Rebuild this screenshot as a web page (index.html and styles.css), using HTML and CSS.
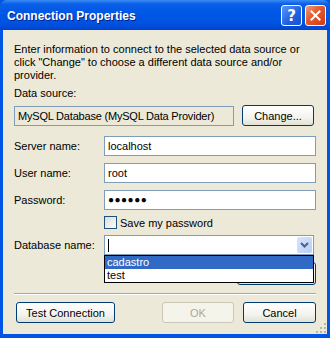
FILE: index.html
```html
<!DOCTYPE html>
<html lang="en">
<head>
    <meta charset="UTF-8">
    <title>Connection Properties</title>
    <link rel="stylesheet" href="styles.css">
</head>
<body>
    <div class="dialog">
        <div class="titlebar">
            <span class="title">Connection Properties</span>
            <div class="caption-buttons">
                <div class="cap-btn help">?</div>
                <div class="cap-btn close">
                    <svg width="11" height="11" viewBox="0 0 11 11">
                        <path d="M1.5 1.5 L9.5 9.5 M9.5 1.5 L1.5 9.5" stroke="#fff" stroke-width="2" stroke-linecap="square"/>
                    </svg>
                </div>
            </div>
        </div>

        <div class="client">
            <p class="intro">Enter information to connect to the selected data source or click "Change" to choose a different data source and/or provider.</p>

            <div class="label-line">Data source:</div>
            <div class="source-row">
                <div class="readonly-box">MySQL Database (MySQL Data Provider)</div>
                <button class="btn">Change...</button>
            </div>

            <div class="field-row first">
                <span class="field-label">Server name:</span>
                <div class="textbox">localhost</div>
            </div>
            <div class="field-row">
                <span class="field-label">User name:</span>
                <div class="textbox">root</div>
            </div>
            <div class="field-row">
                <span class="field-label">Password:</span>
                <div class="textbox password">&#9679;&#9679;&#9679;&#9679;&#9679;&#9679;</div>
            </div>

            <div class="check-row">
                <span class="checkbox"></span>
                <span>Save my password</span>
            </div>

            <div class="field-row db-row">
                <span class="field-label">Database name:</span>
                <div class="combo">
                    <span class="caret"></span>
                    <span class="combo-arrow">
                        <svg width="9" height="6" viewBox="0 0 9 6">
                            <path d="M1 1 L4.5 4.5 L8 1" fill="none" stroke="#4d6185" stroke-width="2"/>
                        </svg>
                    </span>
                    <ul class="dropdown">
                        <li class="selected">cadastro</li>
                        <li>test</li>
                    </ul>
                </div>
            </div>

            <div class="advanced-row">
                <button class="btn advanced">Advanced...</button>
            </div>

            <div class="separator"></div>

            <div class="button-row">
                <button class="btn test">Test Connection</button>
                <div class="right-buttons">
                    <button class="btn" disabled>OK</button>
                    <button class="btn cancel">Cancel</button>
                </div>
            </div>
            <div class="grip"></div>
        </div>
    </div>
</body>
</html>
```

FILE: styles.css
```css
body {
    margin: 0;
    padding: 0;
    font-family: 'Liberation Sans', Arial, sans-serif;
    font-size: 11px;
    color: #000;
}
.dialog {
    width: 330px;
    height: 338px;
    display: flex;
    flex-direction: column;
    background: #0055e5;
    box-sizing: border-box;
}
.titlebar {
    height: 30px;
    display: flex;
    align-items: center;
    justify-content: space-between;
    padding: 0 4px 0 7px;
    background: linear-gradient(to bottom, #3b8cf5 0px, #0a5fe8 4px, #0058e6 12px, #0054e2 22px, #0049d6 28px, #0042c8 30px);
    border-radius: 7px 7px 0 0;
}
.title {
    color: #fff;
    font-family: 'Liberation Sans', Arial, sans-serif;
    font-weight: bold;
    font-size: 12px;
    text-shadow: 1px 1px 0 #0a1e8c;
    margin-top: 2px;
}
.caption-buttons {
    display: flex;
    gap: 3px;
    margin-top: 1px;
}
.cap-btn {
    width: 19px;
    height: 19px;
    border: 1px solid #fff;
    border-radius: 3px;
    display: flex;
    align-items: center;
    justify-content: center;
}
.help {
    background: linear-gradient(135deg, #5b96f8, #1f5fe0 60%, #1a52d0);
    color: #fff;
    font-family: 'DejaVu Sans', sans-serif;
    font-weight: bold;
    font-size: 15px;
}
.close {
    background: linear-gradient(135deg, #f09a7e, #e2582f 45%, #cf3d15);
}
.client {
    flex: 1;
    margin: 0 3px 4px 3px;
    padding: 13px 11px 0 11px;
    background: #ece9d8;
    position: relative;
}
.intro {
    margin: 0;
    line-height: 13px;
}
.label-line {
    margin-top: 5px;
    line-height: 13px;
}
.source-row {
    margin-top: 5px;
    height: 21px;
    display: flex;
    align-items: center;
    gap: 8px;
}
.readonly-box {
    width: 220px;
    height: 20px;
    box-sizing: border-box;
    border: 1px solid #7f9db9;
    padding-left: 3px;
    line-height: 18px;
    letter-spacing: -0.2px;
}
.btn {
    width: 72px;
    height: 21px;
    box-sizing: border-box;
    border: 1px solid #003c74;
    border-radius: 3px;
    background: linear-gradient(to bottom, #ffffff, #f4f3ee 60%, #e3e1d6);
    font-family: 'Liberation Sans', Arial, sans-serif;
    font-size: 11px;
    color: #000;
    padding: 0;
}
.btn:disabled {
    border-color: #c9c7ba;
    background: #f5f4ea;
    color: #aca899;
}
.field-row {
    display: flex;
    align-items: center;
    margin-top: 7px;
}
.field-row.first {
    margin-top: 10px;
}
.field-label {
    width: 90px;
}
.textbox {
    flex: 1;
    height: 20px;
    box-sizing: border-box;
    border: 1px solid #7f9db9;
    background: #fff;
    padding-left: 3px;
    line-height: 18px;
}
.password {
    font-size: 10px;
    letter-spacing: 0.5px;
}
.check-row {
    margin-top: 6px;
    margin-left: 90px;
    height: 13px;
    display: flex;
    align-items: center;
    gap: 3px;
}
.checkbox {
    width: 13px;
    height: 13px;
    box-sizing: border-box;
    border: 1px solid #1c5180;
    background: linear-gradient(135deg, #dcdcd7, #fbfbf9);
}
.db-row {
    margin-top: 6px;
}
.combo {
    position: relative;
    flex: 1;
    margin-right: 2px;
    height: 20px;
    box-sizing: border-box;
    border: 1px solid #7f9db9;
    background: #fff;
    display: flex;
    align-items: center;
    justify-content: space-between;
}
.caret {
    width: 1px;
    height: 13px;
    background: #000;
    margin-left: 3px;
}
.combo-arrow {
    width: 15px;
    height: 16px;
    margin-right: 1px;
    border-radius: 2px;
    background: linear-gradient(135deg, #d8e5fd, #b9cdf8);
    display: flex;
    align-items: center;
    justify-content: center;
}
.dropdown {
    position: absolute;
    top: 19px;
    left: -1px;
    right: -1px;
    margin: 0;
    padding: 0;
    list-style: none;
    border: 1px solid #000;
    background: #fff;
    z-index: 2;
}
.dropdown li {
    height: 13px;
    line-height: 13px;
    padding-left: 2px;
}
.dropdown .selected {
    background: #316ac5;
    color: #fff;
}
.advanced-row {
    margin-top: 7px;
    display: flex;
    justify-content: flex-end;
}
.advanced {
    width: 79px;
    height: 23px;
}
.separator {
    margin-top: 8px;
    border-top: 1px solid #aca899;
    border-bottom: 1px solid #fff;
}
.button-row {
    margin-top: 7px;
    display: flex;
    justify-content: space-between;
    padding-left: 2px;
}
.btn.test {
    width: 99px;
}
.right-buttons {
    display: flex;
    gap: 9px;
}
.btn.cancel {
    width: 73px;
}
.grip {
    position: absolute;
    right: 0;
    bottom: 0;
    width: 12px;
    height: 12px;
    background:
        radial-gradient(circle at 10px 10px, #b8b5a5 1px, transparent 1.5px),
        radial-gradient(circle at 6px 10px, #b8b5a5 1px, transparent 1.5px),
        radial-gradient(circle at 10px 6px, #b8b5a5 1px, transparent 1.5px),
        radial-gradient(circle at 2px 10px, #b8b5a5 1px, transparent 1.5px),
        radial-gradient(circle at 6px 6px, #b8b5a5 1px, transparent 1.5px),
        radial-gradient(circle at 10px 2px, #b8b5a5 1px, transparent 1.5px);
}
```
